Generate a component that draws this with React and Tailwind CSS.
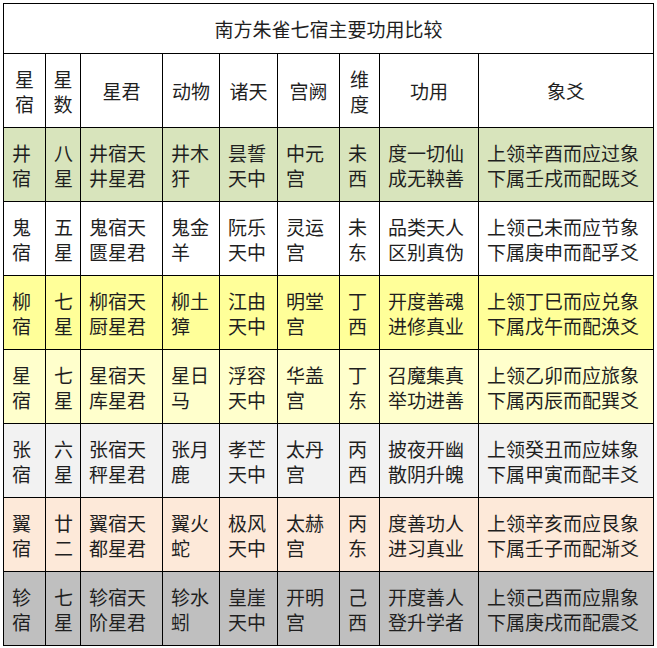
const header = ["星\n宿", "星\n数", "星君", "动物", "诸天", "宫阙", "维\n度", "功用", "象爻"];

const rows = [
  { bg: "bg-[#d8e4bc]", cells: ["井\n宿", "八\n星", "井宿天\n井星君", "井木\n犴", "昙誓\n天中", "中元\n宫", "未\n西", "度一切仙\n成无鞅善", "上领辛酉而应过象\n下属壬戌而配既爻"] },
  { bg: "bg-white", cells: ["鬼\n宿", "五\n星", "鬼宿天\n匮星君", "鬼金\n羊", "阮乐\n天中", "灵运\n宫", "未\n东", "品类天人\n区别真伪", "上领己未而应节象\n下属庚申而配孚爻"] },
  { bg: "bg-[#ffff99]", cells: ["柳\n宿", "七\n星", "柳宿天\n厨星君", "柳土\n獐", "江由\n天中", "明堂\n宫", "丁\n西", "开度善魂\n进修真业", "上领丁巳而应兑象\n下属戊午而配涣爻"] },
  { bg: "bg-[#ffffcc]", cells: ["星\n宿", "七\n星", "星宿天\n库星君", "星日\n马", "浮容\n天中", "华盖\n宫", "丁\n东", "召魔集真\n举功进善", "上领乙卯而应旅象\n下属丙辰而配巽爻"] },
  { bg: "bg-[#f2f2f2]", cells: ["张\n宿", "六\n星", "张宿天\n秤星君", "张月\n鹿", "孝芒\n天中", "太丹\n宫", "丙\n西", "披夜开幽\n散阴升魄", "上领癸丑而应妹象\n下属甲寅而配丰爻"] },
  { bg: "bg-[#fde9d9]", cells: ["翼\n宿", "廿\n二", "翼宿天\n都星君", "翼火\n蛇", "极风\n天中", "太赫\n宫", "丙\n东", "度善功人\n进习真业", "上领辛亥而应艮象\n下属壬子而配渐爻"] },
  { bg: "bg-[#bfbfbf]", cells: ["轸\n宿", "七\n星", "轸宿天\n阶星君", "轸水\n蚓", "皇崖\n天中", "开明\n宫", "己\n西", "开度善人\n登升学者", "上领己酉而应鼎象\n下属庚戌而配震爻"] },
];

function Lines({ text }) {
  return text.split("\n").map((t, i) => <div key={i}>{t}</div>);
}

export default function App() {
  return (
    <div
      className="bg-white min-h-[648px] pt-[3px] pl-[3px] text-[#1f1f1f]"
      style={{ fontFamily: '"Noto Sans CJK SC", "Noto Sans", sans-serif' }}
    >
      <div className="inline-grid bg-black p-px gap-px grid-cols-[41px_34px_81px_56px_57px_61px_39px_98px_174px] grid-rows-[49px_repeat(8,73px)] text-[19px] leading-[25px]">
        <div className="col-span-9 bg-white flex items-center justify-center">南方朱雀七宿主要功用比较</div>
        {header.map((h, i) => (
          <div key={i} className="bg-white flex flex-col items-center justify-center text-center">
            <Lines text={h} />
          </div>
        ))}
        {rows.map((r, ri) =>
          r.cells.map((c, ci) => (
            <div key={ri + "-" + ci} className={`${r.bg} flex flex-col justify-center pl-[8px] whitespace-nowrap`}>
              <Lines text={c} />
            </div>
          ))
        )}
      </div>
    </div>
  );
}
